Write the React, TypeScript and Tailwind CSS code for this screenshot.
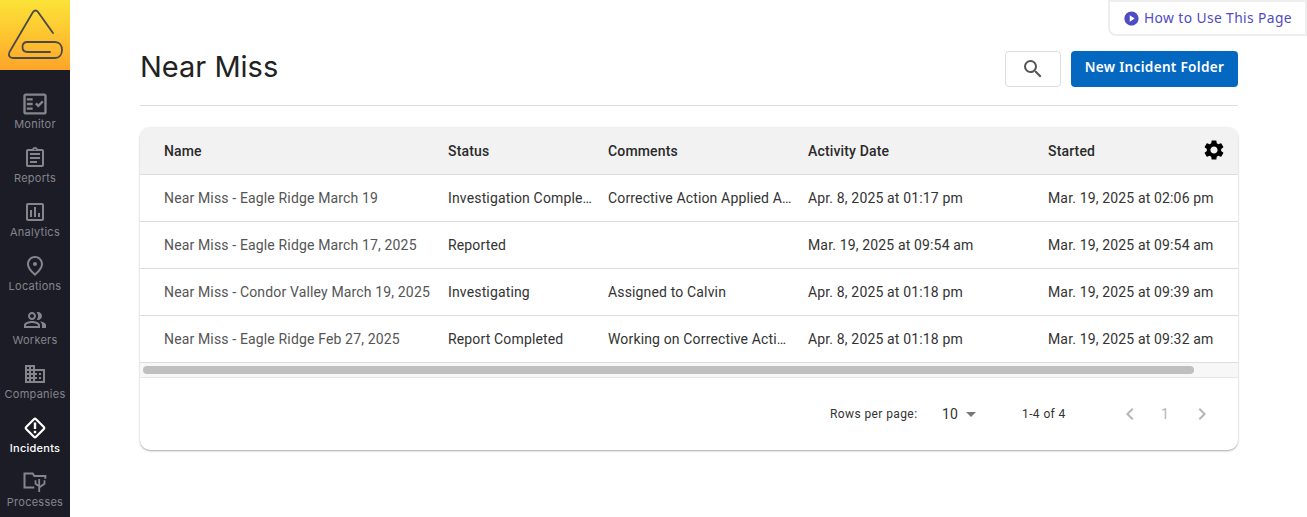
import React from "react";
import { MdOutlineFactCheck, MdOutlineAssignment, MdOutlineAssessment, MdOutlinePlace, MdOutlinePeopleAlt, MdBusiness, MdSettings, MdPlayCircle, MdSearch, MdArrowDropDown, MdChevronLeft, MdChevronRight } from "react-icons/md";

function IncidentIcon() {
  return (
    <svg width="24" height="24" viewBox="0 0 24 24" fill="none">
      <rect x="5" y="5" width="14" height="14" rx="1.5" transform="rotate(45 12 12)" stroke="currentColor" strokeWidth="2.2" />
      <rect x="10.800" y="6.500" width="2.400" height="6.500" fill="currentColor" />
      <rect x="10.800" y="14.800" width="2.400" height="2.400" fill="currentColor" />
    </svg>
  );
}

function ProcessIcon() {
  return (
    <svg width="24" height="24" viewBox="0 0 24 24" fill="none" stroke="currentColor" strokeWidth="2">
      <path d="M11.300 17.500H1.500V3.500h8.200L11.300 6h11v2.700" />
      <path d="M16.200 9v13M12.500 10.300v3.400l3.700 2.500M21.500 10.300v3.400L16.200 17.500" strokeWidth="1.800" />
    </svg>
  );
}

const nav = [
  { label: "Monitor", icon: <MdOutlineFactCheck size={28} /> },
  { label: "Reports", icon: <MdOutlineAssignment size={24} /> },
  { label: "Analytics", icon: <MdOutlineAssessment size={24} /> },
  { label: "Locations", icon: <MdOutlinePlace size={24} /> },
  { label: "Workers", icon: <MdOutlinePeopleAlt size={24} /> },
  { label: "Companies", icon: <MdBusiness size={24} /> },
  { label: "Incidents", icon: <IncidentIcon />, active: true },
  { label: "Processes", icon: <ProcessIcon /> },
];

const rows = [
  ["Near Miss - Eagle Ridge March 19", "Investigation Completed", "Corrective Action Applied And Closed", "Apr. 8, 2025 at 01:17 pm", "Mar. 19, 2025 at 02:06 pm"],
  ["Near Miss - Eagle Ridge March 17, 2025", "Reported", "", "Mar. 19, 2025 at 09:54 am", "Mar. 19, 2025 at 09:54 am"],
  ["Near Miss - Condor Valley March 19, 2025", "Investigating", "Assigned to Calvin", "Apr. 8, 2025 at 01:18 pm", "Mar. 19, 2025 at 09:39 am"],
  ["Near Miss - Eagle Ridge Feb 27, 2025", "Report Completed", "Working on Corrective Actions Now", "Apr. 8, 2025 at 01:18 pm", "Mar. 19, 2025 at 09:32 am"],
];

export default function App() {
  return (
    <div className="flex h-[517px] w-[1307px] overflow-hidden bg-white font-['Roboto',sans-serif]">
      <aside className="flex h-full w-[70px] shrink-0 flex-col overflow-hidden bg-[#1b1c26]">
        <div className="h-[70px] shrink-0 bg-gradient-to-b from-[#fbe338] to-[#fda529]">
          <svg width="70" height="70" viewBox="0 0 70 70" fill="none" stroke="#4a4a4a" strokeWidth="1.800" strokeLinecap="round" strokeLinejoin="round">
            <path d="M53 33 38 12c-1.500-2-3.500-2-5 0L9.500 52c-1.500 3.500 0 6 3.500 6H55c4.500 0 7-3.500 7-8s-2.500-8-7-8H27.500c-3 0-5 2-5 5s2 5 5 5H50" />
          </svg>
        </div>
        <nav className="flex flex-col pt-[22px]">
          {nav.map((n) => (
            <div key={n.label} className={`flex h-[54px] shrink-0 flex-col items-center font-['Inter',sans-serif] text-[11px] leading-[14px] tracking-[0.25px] ${n.active ? "font-medium text-white" : "text-[#85868c]"}`}>
              <div className="flex h-[24px] items-center justify-center">{n.icon}</div>
              <span className="mt-[1px]">{n.label}</span>
            </div>
          ))}
        </nav>
      </aside>

      <main className="relative min-w-0 flex-1 pl-[70px] pr-[69px]">
        <button className="absolute right-0 top-0 flex h-[36px] w-[199px] items-center gap-[4px] rounded-bl-[8px] border-2 border-[#eeeeee] bg-white pl-[13px] font-['Noto_Sans',sans-serif] text-[13.800px] tracking-[0.4px] text-[#4f4bc4]">
          <MdPlayCircle size={17} />
          How to Use This Page
        </button>

        <header className="flex h-[106px] items-end justify-between border-b border-[#dedede] pb-[18px]">
          <h1 className="mb-[2px] font-['Inter',sans-serif] text-[29px] font-normal leading-[36px] text-[#222222]">Near Miss</h1>
          <div className="flex gap-[10px]">
            <button className="flex h-[36px] w-[56px] items-center justify-center rounded-[4px] border border-[#dddddd] text-[#555555]">
              <MdSearch size={24} />
            </button>
            <button className="h-[36px] w-[167px] rounded-[4px] bg-[#0568c0] pb-[3px] font-['Noto_Sans',sans-serif] text-[13.600px] font-semibold tracking-[0.3px] text-white">
              New Incident Folder
            </button>
          </div>
        </header>

        <section className="relative mt-[21px] overflow-hidden rounded-[10px] bg-white text-[14px] tracking-[0.15px] shadow-[0_1px_2px_rgba(0,0,0,0.35)]">
          <div className="flex h-[48px] items-center border-b border-[#dddddd] bg-[#f2f2f2] pt-[2px] font-medium text-[#2a2a2a]">
            <div className="w-[308px] shrink-0 pl-6">Name</div>
            <div className="w-[160px] shrink-0">Status</div>
            <div className="w-[200px] shrink-0">Comments</div>
            <div className="w-[240px] shrink-0">Activity Date</div>
            <div className="shrink-0">Started</div>
            <MdSettings size={24} className="absolute right-[12px] top-[11px] text-black" />
          </div>
          {rows.map((r) => (
            <div key={r[0]} className="flex h-[47px] items-center border-b border-[#dddddd] text-[#333333]">
              <div className="w-[308px] shrink-0 truncate pl-6 text-[#555555]">{r[0]}</div>
              <div className="w-[160px] shrink-0 truncate pr-4">{r[1]}</div>
              <div className="w-[200px] shrink-0 truncate pr-[14px]">{r[2]}</div>
              <div className="w-[240px] shrink-0">{r[3]}</div>
              <div className="shrink-0">{r[4]}</div>
            </div>
          ))}
          <div className="h-[15px] border-b border-[#e8e8e8] bg-[#f7f7f7] pl-[3px] pt-[3px]">
            <div className="h-[8px] w-[1051px] rounded-full bg-[#bfbfbf]" />
          </div>
          <div className="flex h-[72px] items-center text-[#333333]">
            <span className="ml-[690px] w-[112px] text-[12px] tracking-[0.4px]">Rows per page:</span>
            <span className="flex w-[80px] items-center text-[14px]">10<MdArrowDropDown size={24} className="ml-[1px] text-[#777777]" /></span>
            <span className="w-[96px] text-[12px] tracking-[0.4px]">1-4 of 4</span>
            <MdChevronLeft size={24} className="text-[#b5b5b5]" />
            <span className="ml-[17px] mr-[19px] w-[12px] text-center text-[14px] text-[#b5b5b5]">1</span>
            <MdChevronRight size={24} className="text-[#b5b5b5]" />
          </div>
        </section>
      </main>
    </div>
  );
}
